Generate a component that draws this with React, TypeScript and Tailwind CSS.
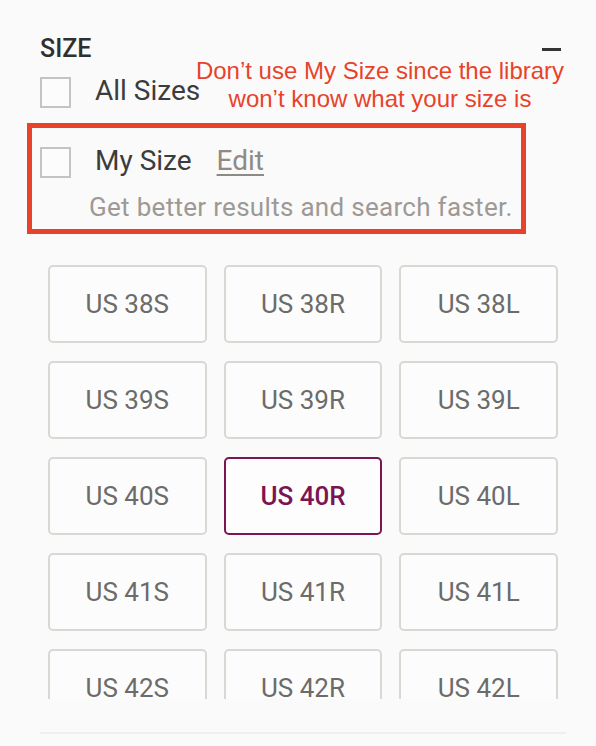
import React from 'react'

const sizes = ['38', '39', '40', '41', '42']
const fits = ['S', 'R', 'L']
const selected = 'US 40R'

const Checkbox = () => (
  <div className="w-[31px] h-[31px] border-2 border-[#c6c4c0] bg-[#fcfcfc] flex-shrink-0"></div>
)

export default function App() {
  return (
    <div className="relative w-[596px] h-[746px] overflow-hidden bg-[#fafafa] font-['Roboto',sans-serif]">
      <div className="pl-[40px] pr-[30px] pt-[35px]">
        {/* 헤더 */}
        <div className="flex items-center justify-between h-[28px]">
          <span className="text-[25px] leading-[28px] font-medium text-[#2f2f2f]">SIZE</span>
          <span className="w-[19px] h-[3px] bg-[#333333] mr-[5px]"></span>
        </div>

        {/* All Sizes */}
        <div className="flex items-center gap-[24px] mt-[14px]">
          <Checkbox />
          <span className="text-[28px] leading-[30px] text-[#3c3c3c] -mt-[3px]">All Sizes</span>
        </div>

        {/* My Size (annotated) */}
        <div className="-ml-[13px] w-[499px] mt-[15px] border-[5px] border-[#e8432a] pl-[8px] pt-[19px] pb-[7px]">
          <div className="flex items-center">
            <Checkbox />
            <span className="ml-[24px] text-[28px] leading-[30px] text-[#3c3c3c] -mt-[3px]">My Size</span>
            <span className="ml-[25px] text-[28px] leading-[30px] text-[#8e8a86] underline underline-offset-[4px] decoration-[2px] -mt-[3px]">
              Edit
            </span>
          </div>
          <div className="mt-[14px] pl-[49px] text-[26px] leading-[30px] text-[#9d9995] tracking-[0.3px]">
            Get better results and search faster.
          </div>
        </div>

        {/* 사이즈 그리드 */}
        <div className="mt-[31px] ml-[8px] w-[510px] h-[434px] overflow-hidden">
          <div className="grid grid-cols-3 gap-x-[17px] gap-y-[18px]">
            {sizes.flatMap((s) =>
              fits.map((f) => {
                const label = `US ${s}${f}`
                const active = label === selected
                return (
                  <div
                    key={label}
                    className={
                      active
                        ? 'h-[78px] rounded-[5px] border-2 border-[#7a1452] bg-[#fdfdfd] flex items-center justify-center text-[26px] font-medium text-[#7a1452]'
                        : 'h-[78px] rounded-[5px] border-2 border-[#dbd7d3] bg-[#fcfcfc] flex items-center justify-center text-[26px] text-[#6b6b6b]'
                    }
                  >
                    {label}
                  </div>
                )
              })
            )}
          </div>
        </div>

        <div className="mt-[33px] h-[2px] bg-[#f0efec]"></div>
      </div>

      {/* 주석 텍스트 */}
      <div className="absolute left-[180px] top-[57px] w-[400px] text-center font-['Liberation_Sans',Arial,sans-serif] text-[24px] leading-[28px] text-[#e8432a]">
        <div>Don’t use My Size since the library</div>
        <div>won’t know what your size is</div>
      </div>
    </div>
  )
}
